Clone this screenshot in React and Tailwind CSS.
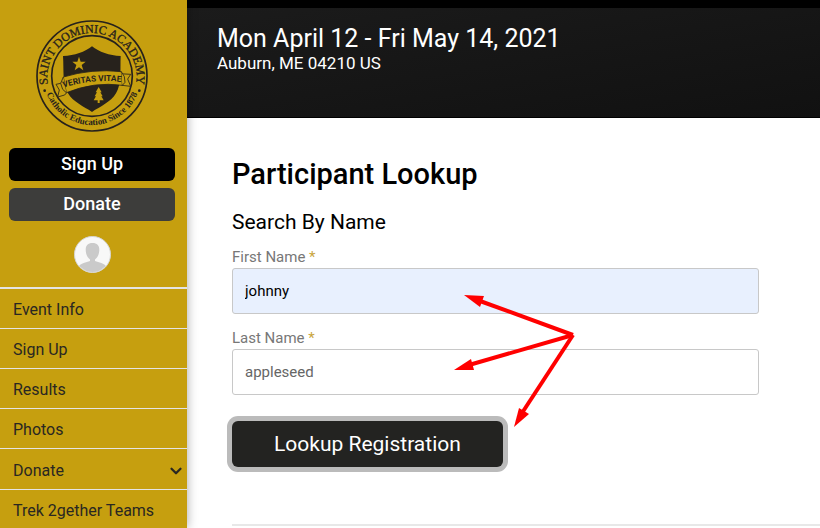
import { ChevronDown } from "lucide-react";

const links = ["Event Info", "Sign Up", "Results", "Photos"];

function SchoolSeal() {
  return (
    <svg
      viewBox="0 0 336 336"
      className="size-28"
      role="img"
      aria-label="Saint Dominic Academy"
    >
      <defs>
        <path id="seal-top" d="M36 196 A134 134 0 1 1 300 196" />
        <path id="seal-bottom" d="M27 207 A146 146 0 0 0 309 207" />
        <path id="seal-motto" d="M88 201 Q168 177 250 185" />
      </defs>
      <g fill="none" stroke="#27221c">
        <circle cx="168" cy="168" r="165" strokeWidth="5" />
        <circle cx="168" cy="168" r="121" strokeWidth="5" />
      </g>
      <g fill="#27221c" fontFamily="Liberation Serif, serif" textAnchor="middle">
        <text fontSize="36" stroke="#27221c" strokeWidth="1">
          <textPath href="#seal-top" startOffset="50%">
            SAINT DOMINIC ACADEMY
          </textPath>
        </text>
        <text fontSize="27" fontWeight="bold">
          <textPath href="#seal-bottom" startOffset="50%">
            Catholic Education Since 1878
          </textPath>
        </text>
      </g>
      <circle cx="26" cy="212" r="4" fill="#27221c" />
      <circle cx="310" cy="212" r="4" fill="#27221c" />
      <path
        d="M168 79 C147 96 116 107 81 108 C84 150 78 190 96 220 C112 247 143 259 168 276 C193 259 224 247 240 220 C258 190 252 150 254 108 C220 107 189 96 168 79 Z"
        fill="#27221c"
      />
      <path
        d="M129 110 L134 125 L149 125 L137 135 L142 151 L129 142 L116 151 L121 135 L109 125 L124 125 Z"
        fill="#c69f0f"
      />
      <path
        d="M188 201 L197 217 L193 217 L200 229 L196 229 L203 241 L191 241 L191 249 L185 249 L185 241 L173 241 L180 229 L176 229 L183 217 L179 217 Z"
        fill="#c69f0f"
      />
      <g fill="#c69f0f" stroke="#27221c" strokeWidth="2.500" strokeLinejoin="round">
        <path d="M88 187 L60 193 L70 210 L65 231 L86 225 L96 213 Z" />
        <path d="M250 161 L284 163 L275 177 L284 199 L258 196 Z" />
        <path d="M82 171 Q168 145 256 155 L259 196 Q175 184 91 218 Z" />
        <path d="M82 171 L74 190 L80 208 L91 218" />
        <path d="M256 155 L265 170 L267 187 L259 196" />
      </g>
      <text
        fontFamily="Roboto, sans-serif"
        fontSize="25"
        fontWeight="bold"
        fill="#27221c"
        textAnchor="middle"
      >
        <textPath href="#seal-motto" startOffset="50%">
          VERITAS VITAE
        </textPath>
      </text>
    </svg>
  );
}

function Avatar() {
  return (
    <svg viewBox="0 0 37 37" className="size-[37px]" aria-hidden="true">
      <defs>
        <clipPath id="avatar-clip">
          <circle cx="18.500" cy="18.500" r="17.500" />
        </clipPath>
      </defs>
      <circle cx="18.500" cy="18.500" r="18" fill="#f8f8f8" stroke="#d6d6d6" />
      <g clipPath="url(#avatar-clip)" fill="#cacaca">
        <path d="M18.500 7 C14 7 11.700 9.500 11.700 13.500 C11.700 18 13 21 16 23.500 L16 25 C12 26.500 7 27 4 31 L4 37 L33 37 L33 31 C30 27 25 26.500 21 25 L21 23.500 C24 21 25.300 18 25.300 13.500 C25.300 9.500 23 7 18.500 7 Z" />
      </g>
    </svg>
  );
}

function Sidebar() {
  return (
    <aside className="relative z-10 w-[187px] shrink-0 overflow-hidden bg-[#c69f0f] shadow-[0_0_10px_rgba(0,0,0,0.35)]">
      <div className="flex flex-col items-center pt-5 pr-3 pl-[9px]">
        <SchoolSeal />
        <div className="mt-4 flex w-full flex-col gap-[7px] text-lg/[31px] font-medium text-white">
          <button className="h-[33px] rounded-md bg-black pb-0.5">
            Sign Up
          </button>
          <button className="h-[33px] rounded-md bg-[#3d3d3b] pb-0.5">
            Donate
          </button>
        </div>
        <button className="mt-[15px] mb-3.5" aria-label="Account">
          <Avatar />
        </button>
      </div>

      <nav className="border-t-2 border-[#e4e4e4] text-base text-[#292722]">
        <ul>
          {links.map((link) => (
            <li key={link} className="border-b border-[#e4e4e4]">
              <a href="#" className="block h-[39px] px-[13px] leading-[42px]">
                {link}
              </a>
            </li>
          ))}
          <li className="border-b border-[#e4e4e4]">
            <a
              href="#"
              className="flex h-10 items-center justify-between pt-1 pr-0.5 pl-[13px]"
            >
              Donate
              <ChevronDown size={18} strokeWidth={3} />
            </a>
          </li>
          <li>
            <a href="#" className="block h-[38px] px-[13px] leading-[42px]">
              Trek 2gether Teams
            </a>
          </li>
        </ul>
      </nav>
    </aside>
  );
}

function Field({ id, label, value, className }) {
  return (
    <div>
      <label htmlFor={id} className="block text-[15px]/[22px] text-[#777]">
        {label} <span className="text-[#c9a53c]">*</span>
      </label>
      <input
        id={id}
        type="text"
        defaultValue={value}
        className={`h-[46px] w-full rounded-[3px] border border-[#c8c8c8] px-3 text-[15px] ${className}`}
      />
    </div>
  );
}

function Arrows() {
  return (
    <svg
      viewBox="0 0 124 136"
      className="pointer-events-none absolute top-[47px] left-[220px] h-[136px] w-[124px]"
      aria-hidden="true"
    >
      <g stroke="#f00" strokeWidth="4" fill="none">
        <path d="M28 8 L121 42" />
        <path d="M17 72 L121 42" />
        <path d="M70 120 L121 42" />
      </g>
      <g fill="#f00">
        <path d="M12 2 L32 3 L28 14 Z" />
        <path d="M2 77 L19 66 L22 77 Z" />
        <path d="M62 134 L67 115 L77 121 Z" />
      </g>
    </svg>
  );
}

function LookupForm() {
  return (
    <form
      className="pt-[37px] pl-[45px]"
      onSubmit={(e) => e.preventDefault()}
    >
      <h1 className="text-[29px]/[38px] font-medium text-black">
        Participant Lookup
      </h1>
      <h2 className="mt-4 text-[21px]/[26px] text-black">Search By Name</h2>
      <div className="relative mt-[11px] mr-[61px]">
        <div className="flex flex-col gap-[13px]">
          <Field
            id="first"
            label="First Name"
            value="johnny"
            className="bg-[#e8f0fe] text-black"
          />
          <Field
            id="last"
            label="Last Name"
            value="appleseed"
            className="bg-white text-[#666]"
          />
        </div>
        <Arrows />
      </div>
      <button className="mt-[26px] h-[46px] rounded-md bg-[#232321] px-[42px] pt-0.5 text-[21px] text-white ring-5 ring-[#bbb]">
        Lookup Registration
      </button>
      <hr className="mt-[57px] border-t-2 border-[#e8e8e8]" />
    </form>
  );
}

export default function App() {
  return (
    <div className="flex h-screen overflow-hidden bg-white font-[Roboto,sans-serif]">
      <Sidebar />
      <main className="min-w-0 flex-1">
        <header className="h-[118px] border-t-8 border-b border-black bg-linear-to-br from-[#1b1b1b] to-[#111] pt-4 pl-[30px] text-white">
          <p className="text-[25px]/[30px]">Mon April 12 - Fri May 14, 2021</p>
          <p className="text-[17px]/[18px]">Auburn, ME 04210 US</p>
        </header>
        <LookupForm />
      </main>
    </div>
  );
}
